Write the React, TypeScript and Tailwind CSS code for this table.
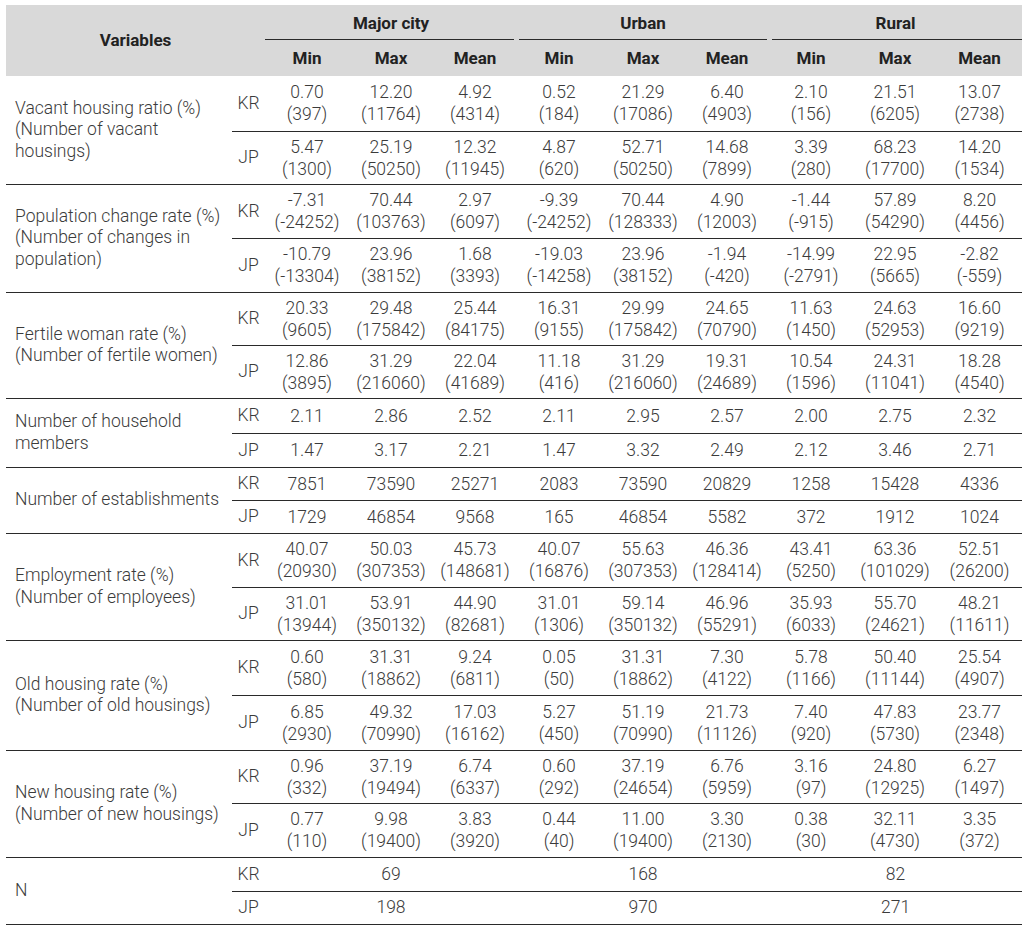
import React from "react";

type Cell = [string, string?];

interface Group {
  label: string[];
  heights: [number, number];
  kr: Cell[];
  jp: Cell[];
}

const c = (s: string): Cell[] =>
  s.split(" ").map((v) => {
    const m = v.match(/^([^()]+)(\((.*)\))?$/);
    return m && m[3] !== undefined ? [m[1], `(${m[3]})`] : [v];
  });

const groups: Group[] = [
  {
    label: ["Vacant housing ratio (%)", "(Number of vacant", "housings)"],
    heights: [55, 53],
    kr: c("0.70(397) 12.20(11764) 4.92(4314) 0.52(184) 21.29(17086) 6.40(4903) 2.10(156) 21.51(6205) 13.07(2738)"),
    jp: c("5.47(1300) 25.19(50250) 12.32(11945) 4.87(620) 52.71(50250) 14.68(7899) 3.39(280) 68.23(17700) 14.20(1534)"),
  },
  {
    label: ["Population change rate (%)", "(Number of changes in", "population)"],
    heights: [54, 54],
    kr: c("-7.31(-24252) 70.44(103763) 2.97(6097) -9.39(-24252) 70.44(128333) 4.90(12003) -1.44(-915) 57.89(54290) 8.20(4456)"),
    jp: c("-10.79(-13304) 23.96(38152) 1.68(3393) -19.03(-14258) 23.96(38152) -1.94(-420) -14.99(-2791) 22.95(5665) -2.82(-559)"),
  },
  {
    label: ["Fertile woman rate (%)", "(Number of fertile women)"],
    heights: [53, 53],
    kr: c("20.33(9605) 29.48(175842) 25.44(84175) 16.31(9155) 29.99(175842) 24.65(70790) 11.63(1450) 24.63(52953) 16.60(9219)"),
    jp: c("12.86(3895) 31.29(216060) 22.04(41689) 11.18(416) 31.29(216060) 19.31(24689) 10.54(1596) 24.31(11041) 18.28(4540)"),
  },
  {
    label: ["Number of household", "members"],
    heights: [35, 34],
    kr: c("2.11 2.86 2.52 2.11 2.95 2.57 2.00 2.75 2.32"),
    jp: c("1.47 3.17 2.21 1.47 3.32 2.49 2.12 3.46 2.71"),
  },
  {
    label: ["Number of establishments"],
    heights: [33, 33],
    kr: c("7851 73590 25271 2083 73590 20829 1258 15428 4336"),
    jp: c("1729 46854 9568 165 46854 5582 372 1912 1024"),
  },
  {
    label: ["Employment rate (%)", "(Number of employees)"],
    heights: [54, 53],
    kr: c("40.07(20930) 50.03(307353) 45.73(148681) 40.07(16876) 55.63(307353) 46.36(128414) 43.41(5250) 63.36(101029) 52.51(26200)"),
    jp: c("31.01(13944) 53.91(350132) 44.90(82681) 31.01(1306) 59.14(350132) 46.96(55291) 35.93(6033) 55.70(24621) 48.21(11611)"),
  },
  {
    label: ["Old housing rate (%)", "(Number of old housings)"],
    heights: [55, 55],
    kr: c("0.60(580) 31.31(18862) 9.24(6811) 0.05(50) 31.31(18862) 7.30(4122) 5.78(1166) 50.40(11144) 25.54(4907)"),
    jp: c("6.85(2930) 49.32(70990) 17.03(16162) 5.27(450) 51.19(70990) 21.73(11126) 7.40(920) 47.83(5730) 23.77(2348)"),
  },
  {
    label: ["New housing rate (%)", "(Number of new housings)"],
    heights: [53, 54],
    kr: c("0.96(332) 37.19(19494) 6.74(6337) 0.60(292) 37.19(24654) 6.76(5959) 3.16(97) 24.80(12925) 6.27(1497)"),
    jp: c("0.77(110) 9.98(19400) 3.83(3920) 0.44(40) 11.00(19400) 3.30(2130) 0.38(30) 32.11(4730) 3.35(372)"),
  },
];

const line = "border-b border-[#2a2a2a]";

function Values({ cells }: { cells: Cell[] }) {
  return (
    <>
      {cells.map(([a, b], i) => (
        <td key={i} className={`${line} p-0 text-center align-middle leading-[22px] whitespace-nowrap`}>
          {a}
          {b && (
            <>
              <br />
              {b}
            </>
          )}
        </td>
      ))}
    </>
  );
}

export default function App() {
  return (
    <div className="bg-white min-h-[935px] pt-[5px] pl-[6px]">
      <table
        className="table-fixed border-collapse w-[1016px] text-[17.5px] font-light text-[#3b3b3b]"
        style={{ fontFamily: "Roboto, 'Liberation Sans', sans-serif" }}
      >
        <colgroup>
          <col className="w-[226px]" />
          <col className="w-[33px]" />
          {Array.from({ length: 9 }).map((_, i) => (
            <col key={i} className={i === 8 ? "w-[85px]" : "w-[84px]"} />
          ))}
        </colgroup>
        <thead className="bg-[#d9d9d9] font-bold text-[17px] text-[#222]">
          <tr className="h-[35px]">
            <th colSpan={2} rowSpan={2} className="text-center align-middle">
              Variables
            </th>
            {["Major city", "Urban", "Rural"].map((g, i) => (
              <th key={g} colSpan={3} className="p-0 align-bottom">
                <div className="pt-[3px] pb-[5px] leading-[22px]">{g}</div>
                <div
                  className={clsx(
                    "border-b border-[#2a2a2a]",
                    i === 0 && "mr-[3px]",
                    i === 1 && "ml-[2px] mr-[2px]",
                    i === 2 && "ml-[3px]"
                  )}
                />
              </th>
            ))}
          </tr>
          <tr className="h-[36px]">
            {Array.from({ length: 3 }).flatMap((_, g) =>
              ["Min", "Max", "Mean"].map((h) => (
                <th key={`${g}-${h}`} className="text-center align-middle pt-[2px]">
                  {h}
                </th>
              ))
            )}
          </tr>
        </thead>
        <tbody>
          {groups.map((g) => (
            <React.Fragment key={g.label[0]}>
              <tr style={{ height: g.heights[0] }}>
                <td rowSpan={2} className={`${line} pl-[9px] align-middle leading-[21.5px] whitespace-nowrap`}>
                  {g.label.map((l, i) => (
                    <div key={i}>{l}</div>
                  ))}
                </td>
                <td className={`${line} text-center`}>KR</td>
                <Values cells={g.kr} />
              </tr>
              <tr style={{ height: g.heights[1] }}>
                <td className={`${line} text-center`}>JP</td>
                <Values cells={g.jp} />
              </tr>
            </React.Fragment>
          ))}
          <tr className="h-[34px]">
            <td rowSpan={2} className={`${line} pl-[9px] align-middle`}>
              N
            </td>
            <td className={`${line} text-center`}>KR</td>
            {["69", "168", "82"].map((v) => (
              <td key={v} colSpan={3} className={`${line} text-center`}>
                {v}
              </td>
            ))}
          </tr>
          <tr className="h-[33px]">
            <td className={`${line} text-center`}>JP</td>
            {["198", "970", "271"].map((v) => (
              <td key={v} colSpan={3} className={`${line} text-center`}>
                {v}
              </td>
            ))}
          </tr>
        </tbody>
      </table>
    </div>
  );
}

function clsx(...xs: (string | false | undefined)[]) {
  return xs.filter(Boolean).join(" ");
}
